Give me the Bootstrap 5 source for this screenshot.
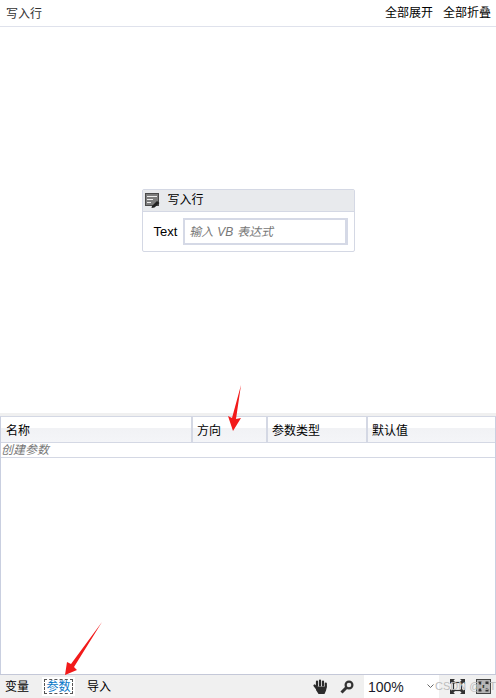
<!DOCTYPE html>
<html lang="zh-CN">
<head>
    <meta charset="UTF-8">
    <meta name="viewport" content="width=device-width, initial-scale=1.0">
    <title>写入行</title>
    <link rel="stylesheet" href="https://cdn.jsdelivr.net/npm/bootstrap@5.3.0/dist/css/bootstrap.min.css">
    <style>
        html, body { height: 100%; }
        body { width: 496px; height: 698px; overflow: hidden; position: relative; background: #fff; color: #000; font: 12px/16px "Liberation Sans", "Noto Sans CJK SC", sans-serif; }
        .top-bar { height: 27px; flex: none; padding: 2px 5px 0 6px; border-bottom: 1px solid #dfe2ec; }
        .top-title { color: #333; }
        .top-links { gap: 10px; margin-top: -2px; }
        .canvas-area { height: 386px; flex: none; }
        .act-box { width: 213px; height: 63px; margin-top: 162px; border: 1px solid #d4d8e4; border-radius: 2px; background: #fff; }
        .act-head { height: 22px; background: #e8eaed; border-bottom: 1px solid #d4d8e4; padding-left: 2px; gap: 8px; }
        .act-head span { margin-top: -2px; }
        .act-body { padding: 6px 6px 5px 11px; gap: 6px; font-size: 13px; }
        .expr-input { width: 165px; height: 27px; border: 2px solid #d5d9e6; border-right-width: 3px; padding-left: 4px; color: #777; font-size: 12px; font-style: italic; word-spacing: .5px; }
        .split-band { height: 3px; flex: none; background: #f0f0f0; }
        .grid-area { min-height: 0; border-left: 1px solid #c9cfe0; border-right: 1px solid #c9cfe0; border-top: 1px solid #d4d8e4; }
        .grid-head { height: 26px; flex: none; border-bottom: 1px solid #d4d8e4; background: linear-gradient(#fff 0, #fff 42%, #f1f2f5 46%, #f4f5f8 100%); }
        .grid-head > div { padding-left: 4px; line-height: 29px; border-right: 2px solid #d4d8e4; }
        .grid-head > div:first-child { padding-left: 5px; }
        .grid-head > div:last-child { border-right: 0; }
        .c1 { width: 192px; } .c2 { width: 75px; } .c3 { width: 100px; }
        .create-row { height: 15px; flex: none; border-bottom: 1px solid #d4d8e4; color: #777; font-style: italic; line-height: 14px; }
        .status-bar { height: 24px; flex: none; background: #f0f0f0; border-top: 1px solid #c4c8d8; padding-left: 5px; }
        .tab-item { height: 19px; line-height: 21px; }
        .tab-on { width: 33px; margin: 0 12px 0 13px; text-align: center; color: #0a78c8; background: #fff; outline: 1px dashed #555; outline-offset: -3px; }
        .hand-icon { margin-right: 12px; }
        .zoom-box { width: 75px; height: 23px; background: #fff; font-size: 14px; color: #1a1a2a; padding: 0 5px 0 4px; margin: 0 11px 0 10px; }
        .zoom-caret { margin-left: auto; }
        .fit-icon { margin-right: 11px; }
        .grid-icon { margin-right: 5px; }
        .mark-layer { position: absolute; left: 0; top: 0; pointer-events: none; }
        .water-mark { position: absolute; left: 435px; top: 680px; font-size: 11px; line-height: 13px; color: #bdbdbd; white-space: nowrap; }
    </style>
</head>
<body class="d-flex flex-column">
    <!-- top bar -->
    <div class="top-bar d-flex align-items-center justify-content-between">
        <span class="top-title">写入行</span>
        <span class="top-links d-flex"><span>全部展开</span><span>全部折叠</span></span>
    </div>

    <!-- designer -->
    <div class="canvas-area d-flex justify-content-center">
        <div class="act-box">
            <div class="act-head d-flex align-items-center">
                <svg width="15" height="15" viewBox="0 0 15 15">
                    <rect x="0.5" y="0.5" width="13" height="12" fill="#7d7d7d" stroke="#4a4a4a"/>
                    <path d="M2 3h10v1H2zM2 6h6v1H2zM2 9h4v1H2z" fill="#eee"/>
                    <path d="M7 13l5-5 2.500 2-5 4.500-3 .5z" fill="#222"/>
                </svg>
                <span>写入行</span>
            </div>
            <div class="act-body d-flex align-items-center">
                <span>Text</span>
                <div class="expr-input d-flex align-items-center">输入 VB 表达式</div>
            </div>
        </div>
    </div>

    <div class="split-band"></div>

    <!-- argument grid -->
    <div class="grid-area flex-grow-1 d-flex flex-column">
        <div class="grid-head d-flex">
            <div class="c1">名称</div>
            <div class="c2">方向</div>
            <div class="c3">参数类型</div>
            <div class="flex-grow-1">默认值</div>
        </div>
        <div class="create-row">创建参数</div>
    </div>

    <!-- status bar -->
    <div class="status-bar d-flex align-items-center">
        <span class="tab-item">变量</span>
        <span class="tab-item tab-on">参数</span>
        <span class="tab-item">导入</span>
        <span class="d-flex align-items-center ms-auto">
            <svg class="hand-icon" width="15" height="15" viewBox="0 0 15 15">
                <path d="M1.500 6.500L5 11M4 7V2.500M7 6.500V1.500M10 6.500V2.500M12.800 7.500V4.500" stroke="#2b2b2b" stroke-width="2.200" stroke-linecap="round" fill="none"/>
                <path d="M3 7.500h11L13 11.500 11.500 15H5.500L3 11z" fill="#2b2b2b"/>
            </svg>
            <svg width="14" height="14" viewBox="0 0 14 14">
                <circle cx="9" cy="5" r="3.400" fill="#e8e8e8" stroke="#333" stroke-width="2.200"/>
                <path d="M6.500 7.500L1.500 12.500" stroke="#333" stroke-width="3"/>
            </svg>
            <span class="zoom-box d-flex align-items-center">100%
                <svg class="zoom-caret" width="7" height="5" viewBox="0 0 7 5"><path d="M.5 .5l3 3 3-3" fill="none" stroke="#666"/></svg>
            </span>
            <svg class="fit-icon" width="15" height="15" viewBox="0 0 15 15">
                <rect x="3.500" y="3.500" width="8" height="8" fill="none" stroke="#333" stroke-width="1.200"/>
                <path d="M0 0h5L3.500 1.500 5.500 3.500 3.500 5.500 1.500 3.500 0 5zM15 0v5l-1.500-1.500-2 2-2-2 2-2L10 0zM0 15v-5l1.500 1.500 2-2 2 2-2 2L5 15zM15 15h-5l1.500-1.500-2-2 2-2 2 2L15 10z" fill="#333"/>
            </svg>
            <svg class="grid-icon" width="15" height="15" viewBox="0 0 15 15">
                <rect x="0.500" y="0.500" width="14" height="14" fill="#b4b4b4" stroke="#444"/>
                <path d="M2.500 2.500h3v3h-3zM9.500 2.500h3v3h-3zM2.500 9.500h3v3h-3zM9.500 9.500h3v3h-3zM6 6h3v3H6z" fill="#333"/>
            </svg>
        </span>
    </div>

    <div class="water-mark">CSDN @IoT</div>

    <!-- red annotation arrows -->
    <svg class="mark-layer" width="496" height="698" viewBox="0 0 496 698">
        <path d="M241 385L236 419 241 418 233 431 228 416 232 418z" fill="#f21a1a"/>
        <path d="M102 622L74 667 77 670 65 675 67 662 71 664z" fill="#f21a1a"/>
    </svg>
</body>
</html>
